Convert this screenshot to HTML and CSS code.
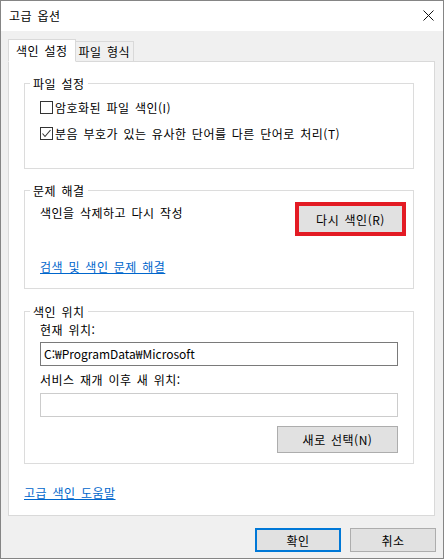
FILE: index.html
```html
<!DOCTYPE html>
<html lang="ko">
<head>
  <meta charset="utf-8">
  <title>고급 옵션</title>
  <link rel="stylesheet" href="styles.css">
</head>
<body>
  <div class="window">
    <div class="titlebar">
      <span class="title">고급 옵션</span>
      <svg class="close" width="11" height="11" viewBox="0 0 11 11">
        <path d="M0.5 0.5L10.5 10.5M10.5 0.5L0.5 10.5" stroke="#111" stroke-width="1" fill="none"/>
      </svg>
    </div>

    <div class="content">
      <div class="tabs">
        <div class="tab active">색인 설정</div>
        <div class="tab">파일 형식</div>
      </div>

      <div class="panel">
        <fieldset class="group">
          <legend>파일 설정</legend>
          <div class="group-body files">
            <label class="check"><span class="box"></span>암호화된 파일 색인(I)</label>
            <label class="check">
              <span class="box">
                <svg width="11" height="11" viewBox="0 0 11 11"><path d="M1.5 5.5L4 8.5L9.5 2" stroke="#333" stroke-width="1.1" fill="none"/></svg>
              </span>분음 부호가 있는 유사한 단어를 다른 단어로 처리(T)
            </label>
          </div>
        </fieldset>

        <fieldset class="group">
          <legend>문제 해결</legend>
          <div class="group-body trouble">
            <div class="rebuild-row">
              <span class="rebuild-text">색인을 삭제하고 다시 작성</span>
              <button class="btn rebuild">다시 색인(R)</button>
            </div>
            <a href="#" class="link">검색 및 색인 문제 해결</a>
          </div>
        </fieldset>

        <fieldset class="group">
          <legend>색인 위치</legend>
          <div class="group-body location">
            <div class="field-label">현재 위치:</div>
            <div class="textbox">C:₩ProgramData₩Microsoft</div>
            <div class="field-label second">서비스 재개 이후 새 위치:</div>
            <div class="textbox disabled"></div>
            <button class="btn select">새로 선택(N)</button>
          </div>
        </fieldset>

        <a href="#" class="link help">고급 색인 도움말</a>
      </div>

      <div class="footer">
        <button class="btn default">확인</button>
        <button class="btn">취소</button>
      </div>
    </div>
  </div>
</body>
</html>
```

FILE: styles.css
```css
body {
  margin: 0;
  font-family: "Noto Sans CJK KR", "Noto Sans", sans-serif;
  font-size: 12px;
  letter-spacing: 0.5px;
  word-spacing: 1.5px;
  color: #000;
  background-color: #f0f0f0;
}

.window {
  width: 444px;
  height: 559px;
  box-sizing: border-box;
  border: 1px solid #858585;
  display: flex;
  flex-direction: column;
}

.titlebar {
  height: 30px;
  background-color: #ffffff;
  display: flex;
  align-items: center;
  justify-content: space-between;
  padding: 0 9px 0 8px;
}

.title {
  line-height: 30px;
}

.close {
  display: block;
  margin-top: -1px;
}

.content {
  flex: 1;
  padding: 8px 8px 0 7px;
  display: flex;
  flex-direction: column;
}

/* tab strip */
.tabs {
  display: flex;
  align-items: flex-end;
  height: 22px;
}

.tab {
  height: 20px;
  box-sizing: border-box;
  line-height: 19px;
  padding: 0 3px 0 3px;
  border-top: 1px solid #d9d9d9;
  border-right: 1px solid #d9d9d9;
  background-color: #f0f0f0;
}

.tab.active {
  position: relative;
  z-index: 1;
  height: 23px;
  line-height: 21px;
  padding: 0 7px 0 7px;
  margin-bottom: -1px;
  border: 1px solid #d9d9d9;
  border-bottom: 1px solid #ffffff;
  background-color: #ffffff;
}

.panel {
  height: 455px;
  box-sizing: border-box;
  border: 1px solid #d9d9d9;
  background-color: #ffffff;
  display: flex;
  flex-direction: column;
  align-items: flex-start;
}

/* group boxes */
.group {
  align-self: stretch;
  margin: 14px 20px 0 15px;
  padding: 0;
  border: 1px solid #dcdcdc;
  min-width: 0;
}

.group + .group {
  margin-top: 14px;
}

.group:nth-of-type(3) {
  margin-top: 15px;
}

.group legend {
  margin-left: 5px;
  padding: 0 3px;
  line-height: 15px;
}

.group-body {
  display: flex;
  flex-direction: column;
  padding: 0 15px;
}

.group-body.files {
  padding-top: 6px;
  padding-bottom: 24px;
  gap: 5px;
}

.check {
  display: flex;
  align-items: center;
  height: 21px;
}

.box {
  width: 13px;
  height: 13px;
  box-sizing: border-box;
  border: 1px solid #333333;
  background-color: #ffffff;
  margin-right: 2px;
  display: flex;
  align-items: center;
  justify-content: center;
}

.box svg {
  display: block;
}

.group-body.trouble {
  padding-top: 8px;
  padding-bottom: 14px;
  align-items: flex-start;
}

.rebuild-row {
  align-self: stretch;
  display: flex;
  justify-content: space-between;
  align-items: flex-start;
}

.rebuild-text {
  line-height: 14px;
}

.link {
  color: #0066cc;
  line-height: 14px;
  text-decoration: underline;
}

.trouble .link {
  margin-top: 28px;
}

.group-body.location {
  padding-top: 4px;
  padding-bottom: 10px;
}

.field-label {
  line-height: 14px;
}

.field-label.second {
  margin-top: 7px;
}

.textbox {
  height: 24px;
  box-sizing: border-box;
  margin-top: 5px;
  border: 1px solid #7a7a7a;
  background-color: #ffffff;
  padding: 0 3px;
  line-height: 22px;
  letter-spacing: 0;
}

.textbox.disabled {
  margin-top: 6px;
  border-color: #cccccc;
}

.help {
  margin: 22px 0 0 15px;
}

/* push buttons */
.btn {
  font-family: inherit;
  font-size: 12px;
  letter-spacing: 0.5px;
  word-spacing: 1.5px;
  color: #000;
  background-color: #e1e1e1;
  border: 1px solid #adadad;
  padding: 0;
}

.btn.rebuild {
  width: 103px;
  height: 26px;
  margin-right: -4px;
  border-color: #e1e1e1;
  outline: 4px solid #e31b24;
}

.btn.select {
  align-self: flex-end;
  width: 121px;
  height: 27px;
  margin-top: 9px;
}

.footer {
  display: flex;
  justify-content: flex-end;
  gap: 9px;
  margin: 12px -1px 0 0;
}

.footer .btn {
  width: 86px;
  height: 24px;
}

.btn.default {
  border: 2px solid #0078d7;
}
```
